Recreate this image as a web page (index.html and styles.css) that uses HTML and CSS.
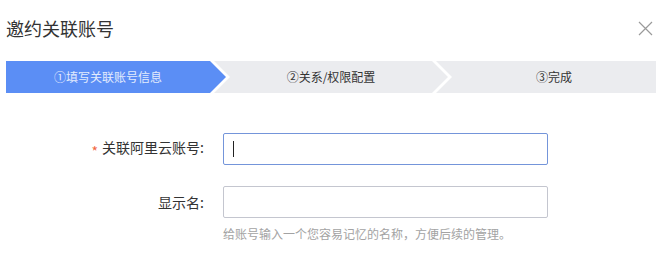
FILE: index.html
```html
<!DOCTYPE html>
<html lang="zh-CN">
<head>
<meta charset="utf-8">
<title>邀约关联账号</title>
<link rel="stylesheet" href="styles.css">
</head>
<body>
<div class="dialog">
  <div class="header">
    <div class="title">邀约关联账号</div>
    <svg class="close" width="15" height="15" viewBox="0 0 15 15">
      <path d="M1 1 L14 14 M14 1 L1 14" stroke="#9a9a9a" stroke-width="1.2" fill="none"/>
    </svg>
  </div>
  <div class="steps">
    <div class="step step-first active">①填写关联账号信息</div>
    <div class="step step-mid">②关系/权限配置</div>
    <div class="step step-last">③完成</div>
  </div>
  <div class="form">
    <div class="row">
      <div class="label"><span class="req">*</span>关联阿里云账号:</div>
      <div class="input focused"><span class="caret"></span></div>
    </div>
    <div class="row row-second">
      <div class="label">显示名:</div>
      <div class="input"></div>
    </div>
    <div class="help">给账号输入一个您容易记忆的名称，方便后续的管理。</div>
  </div>
</div>
</body>
</html>
```

FILE: styles.css
```css
html, body {
  margin: 0;
  padding: 0;
  background: #ffffff;
}
body {
  font-family: "Noto Sans CJK SC", "Noto Sans", "Liberation Sans", sans-serif;
  color: #333333;
}
.dialog {
  width: 671px;
  height: 258px;
  overflow: hidden;
}
.header {
  display: flex;
  align-items: center;
  justify-content: space-between;
  padding: 16px 18px 0 6px;
  height: 24px;
}
.title {
  font-size: 18px;
  line-height: 24px;
  color: #333333;
}
.close {
  display: block;
}
.steps {
  display: flex;
  margin: 21px 15px 0 6px;
  height: 32px;
}
.step {
  height: 32px;
  line-height: 32px;
  font-size: 12px;
  text-align: center;
  background: #ebecef;
  color: #333333;
  box-sizing: border-box;
  white-space: nowrap;
}
.step.active {
  background: #5b8ef5;
  color: #e2ebfd;
}
.step-first {
  width: 220px;
  padding-right: 16px;
  clip-path: polygon(0 0, 204px 0, 220px 50%, 204px 100%, 0 100%);
}
.step-mid {
  width: 234px;
  margin-left: -12px;
  padding: 0 16px;
  clip-path: polygon(0 0, 218px 0, 234px 50%, 218px 100%, 0 100%, 16px 50%);
}
.step-last {
  width: 220px;
  margin-left: -12px;
  padding-left: 16px;
  clip-path: polygon(0 0, 100% 0, 100% 100%, 0 100%, 16px 50%);
}
.form {
  margin-top: 40px;
}
.row {
  display: flex;
  align-items: center;
  gap: 19px;
  height: 32px;
}
.row-second {
  margin-top: 21px;
}
.label {
  width: 204px;
  text-align: right;
  font-size: 14px;
  line-height: 20px;
  color: #333333;
}
.req {
  color: #f2673f;
  font-size: 14px;
  vertical-align: -4px;
  margin-right: 4px;
}
.input {
  width: 325px;
  height: 32px;
  box-sizing: border-box;
  border: 1px solid #c4c6cf;
  border-radius: 2px;
  background: #ffffff;
  display: flex;
  align-items: center;
  padding-left: 9px;
}
.input.focused {
  border-color: #7495da;
}
.caret {
  width: 1px;
  height: 16px;
  background: #222222;
}
.help {
  margin: 7px 0 0 223px;
  font-size: 12px;
  line-height: 18px;
  color: #a3a3a3;
}
```
